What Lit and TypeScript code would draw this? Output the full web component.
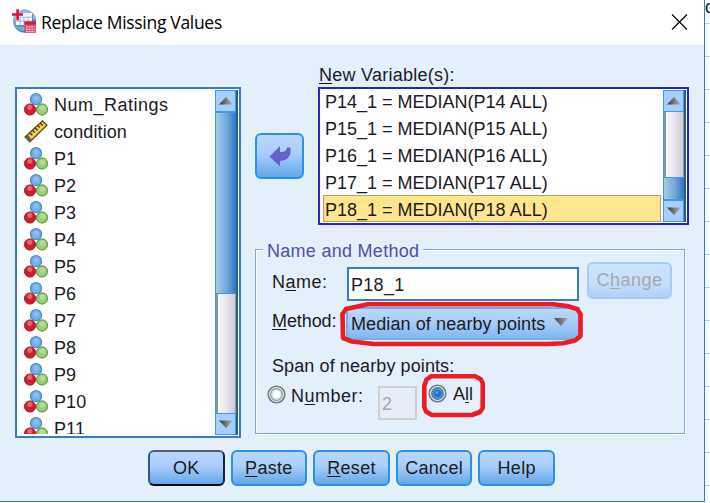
import { LitElement, html, css, svg } from "lit";
import { customElement, property } from "lit/decorators.js";
import { classMap } from "lit/directives/class-map.js";
import { styleMap } from "lit/directives/style-map.js";

const nominalIcon = html`<svg width="24" height="23" viewBox="0 0 24 23">
  <circle cx="12" cy="6.2" r="5.5" fill="#75adea" stroke="#4b8bd2" stroke-width="1.3" />
  <circle cx="12.3" cy="5" r="2.6" fill="#93c1f3" opacity=".8" />
  <circle cx="18" cy="16.5" r="5.5" fill="#9ccb7c" stroke="#6aa545" stroke-width="1.3" />
  <circle cx="18.5" cy="15" r="2.8" fill="#b9dda0" opacity=".8" />
  <circle cx="6" cy="16.5" r="5.6" fill="#c9202a" stroke="#ae1730" stroke-width="1" />
  <circle cx="5.8" cy="14.3" r="2.6" fill="#e57f85" opacity=".75" />
</svg>`;

const scaleIcon = html`<svg width="24" height="23" viewBox="0 0 24 23">
  <path d="M1 17 L18.5 .8 L23 5.2 L5.8 22Z" fill="#efc943" stroke="#514522" stroke-width="1.2" />
  <path d="M1.3 17.3 L5.8 22 L8.2 19.6 L3.9 15Z" fill="#6e6038" />
  <path d="M6 13l2.6 2.6M8.6 10.5l2 2M11.2 8l2.6 2.6M13.8 5.6l2 2M16.4 3.2l2.6 2.6" stroke="#40371a" stroke-width="1.4" />
  <path d="M5.8 18.4 L20.4 4.6" stroke="#fbe887" stroke-width="1" opacity=".8" />
</svg>`;

const appIcon = html`<svg width="24" height="24" viewBox="0 0 24 24">
  <defs>
    <linearGradient id="globe" x1="0" y1="0" x2="1" y2="1">
      <stop offset="0" stop-color="#c5dcee" /><stop offset=".45" stop-color="#5a94c8" /><stop offset="1" stop-color="#2e6ca8" />
    </linearGradient>
  </defs>
  <circle cx="12.5" cy="12" r="11.6" fill="url(#globe)" />
  <path d="M11 .4a11.6 11.6 0 0 1 12.8 10.4h-3V5H11z" fill="#9ab8d4" />
  <rect x="4" y="4" width="16" height="12" fill="#f4f8fc" />
  <path d="M4 8.2h16M4 12h16M8 8v8M12 8v8M16 8v8" stroke="#8fb0d0" stroke-width=".9" />
  <path d="M2.5 17c2 3.5 6 5 10 5v-4z" fill="#75a9d6" />
  <path d="M5.6 .3v11M0 5.5h11" stroke="#d2153c" stroke-width="2.6" />
  <rect x="12.5" y="12.5" width="11.5" height="11.5" fill="#dc4b68" />
  <path d="M12.5 14h11.5" stroke="#c41f45" stroke-width="3" />
  <path d="M14 17.8h9M14 20.3h9M14 22.7h9" stroke="#f9d3da" stroke-width="1.3" stroke-dasharray="1.8 .9" />
</svg>`;

@customElement("scroll-rail")
class ScrollRail extends LitElement {
  @property({ type: Number }) start = 0;
  @property({ type: Number }) size = 0;
  static styles = css`
    :host { display: flex; flex-direction: column; width: 23px; box-sizing: border-box; border-left: 1px solid #3d97ee; border-right: 2px solid #235f9e; }
    .end { height: 22px; box-sizing: border-box; flex: none; background: #a6ceff; border: 1px solid #3d97ee; border-left-width: 0; display: flex; align-items: center; justify-content: center; }
    .track { flex: 1; display: flex; flex-direction: column; box-sizing: border-box; background: linear-gradient(90deg, #f7f7f9, #e9e8ee 45%, #cdccd4); border-left: 2px solid #8395ad; border-right: 1px solid #9696a0; }
    .thumb { flex: none; margin: 0 -1px 0 -2px; box-sizing: border-box; background: linear-gradient(90deg, #a8cbe9, #6fa7d9 55%, #3179bd); border-top: 1px solid #3d97ee; border-bottom: 1px solid #3d97ee; }
    svg { display: block; }
  `;
  render() {
    const arrow = (up: boolean) => html`<svg width="14" height="8" viewBox="0 0 14 8">
      <defs><linearGradient id="g"><stop offset="0" stop-color="#333" /><stop offset=".5" stop-color="#777" /><stop offset="1" stop-color="#b9b4ac" /></linearGradient></defs>
      <path d=${up ? "M0 7.5L7 0L14 7.5Z" : "M0 .5L7 8L14 .5Z"} fill="url(#g)" />
    </svg>`;
    return html`<div class="end">${arrow(true)}</div>
      <div class="track"><div class="thumb" style=${styleMap({ marginTop: `${this.start}px`, height: `${this.size}px` })}></div></div>
      <div class="end">${arrow(false)}</div>`;
  }
}

@customElement("dialog-button")
class DialogButton extends LitElement {
  @property() variant = "";
  static styles = css`
    :host { display: block; flex: none; }
    .btn { height: 100%; box-sizing: border-box; border: 2px solid #2f8fe6; border-radius: 6px; background: linear-gradient(#b9d7fd, #a9cdfa 45%, #83b8ef 75%, #62a6ea); display: flex; align-items: center; justify-content: center; }
    .primary { border-color: #555c68 #10253c #080b10 #31588a; }
    .disabled { border-color: #a3cdf5; background: linear-gradient(#cfe3fc, #c6dffb 55%, #afd2f6); color: #a4a8ad; }
  `;
  render() {
    return html`<div class=${classMap({ btn: true, primary: this.variant === "primary", disabled: this.variant === "disabled" })}><slot></slot></div>`;
  }
}

const sources = ["Num_Ratings", "condition", ...Array.from({ length: 11 }, (_, i) => `P${i + 1}`)];
const created = [14, 15, 16, 17, 18];

@customElement("app-root")
class AppRoot extends LitElement {
  static styles = css`
    :host { display: block; position: relative; width: 710px; height: 503px; overflow: hidden; background: #fff; color: #1c1a24; font: 18px/21px "Liberation Sans", Arial, sans-serif; white-space: nowrap; }
    u { text-decoration: underline; text-decoration-thickness: 1px; text-underline-offset: 2px; text-decoration-skip-ink: none; }
    svg { display: block; }
    .screen { display: flex; height: 503px; }
    .window { width: 704px; height: 501px; flex: none; border-right: 1px solid #1a82d8; border-bottom: 1px solid #1a82d8; background: #e3effb; }
    .sheet { flex: 1; overflow: hidden; background: repeating-linear-gradient(#fff 0 23px, #b4cfea 23px 24px, #fff 24px 33px); line-height: 15px; font-size: 18px; }
    .title { height: 45px; box-sizing: border-box; background: #fff; display: flex; padding: 9px 16px 0 12px; }
    .title h1 { margin: 0 0 0 5px; font: 17.5px/27px "Open Sans", "Noto Sans", sans-serif; color: #000; flex: 1; letter-spacing: -0.31px; }
    .close { margin-top: 5px; }
    .main { display: flex; height: 393px; padding: 0 15px; }
    .list { box-sizing: border-box; display: flex; background: #fff; overflow: hidden; }
    .sources { width: 226px; height: 351px; margin-top: 42px; border: 2px solid #3a7cc0; padding-right: 1px; flex: none; }
    .items { flex: 1; overflow: hidden; }
    .sources .items { padding: 2px 0 0 7px; height: 345px; box-sizing: border-box; }
    .sources scroll-rail { margin: 1px 0; }
    .item { display: flex; height: 27px; line-height: 29px; letter-spacing: .1px; }
    .item svg { margin: 2px 6px 0 0; flex: none; }
    .item.wide { letter-spacing: .5px; }
    .move { width: 49px; height: 46px; margin: 88px 14px 0; }
    .right { width: 371px; flex: none; margin-top: 20px; }
    .caption { height: 22px; padding-left: 1px; letter-spacing: .25px; }
    .targets { height: 138px; border: 2px solid #2626c0; padding: 0 1px 0 3px; }
    .targets .items { margin-top: -2px; }
    .targets scroll-rail { margin: 1px 0 1px 2px; }
    .targets .item { line-height: 31px; padding-left: 2px; box-sizing: border-box; letter-spacing: 0; }
    .targets .item.selected { background: #ffe68c; border: 1px solid #b5a36a; line-height: 29px; padding-left: 1px; }
    .group { position: relative; margin: 24px 0 0 -63px; width: 430px; height: 185px; box-sizing: border-box; border: 1px solid #7ba8d8; box-shadow: 1px 1px 0 #fff, inset 1px 1px 0 #fff; padding: 0 0 0 16px; }
    .legend { position: absolute; left: 7px; top: -9px; padding: 0 4px; background: #e3effb; color: #5250a8; letter-spacing: .28px; }
    .line { display: flex; }
    .name-line { padding-top: 12px; }
    .name-line label { width: 75px; margin-top: 10px; letter-spacing: .5px; }
    .input { box-sizing: border-box; background: #fff; border: 2px solid #3c7fc1; width: 232px; height: 34px; line-height: 33px; padding-left: 2px; margin-top: 5px; letter-spacing: .3px; }
    .change { width: 85px; height: 37px; margin-left: 8px; letter-spacing: .5px; }
    .method-line { margin-top: 6px; height: 33px; }
    .method-line label { width: 74px; margin-top: 4px; letter-spacing: -.1px; }
    .combo { box-sizing: border-box; width: 234px; height: 33px; border: 2px solid #70b0ef; background: linear-gradient(#bad8fb, #a3caf7 55%, #80b8ef); padding: 0 10px 0 3px; display: flex; justify-content: space-between; line-height: 31px; letter-spacing: .1px; }
    .combo svg { margin-top: 9px; }
    .span-line { margin-top: 16px; letter-spacing: .1px; }
    .radio-line { margin: 8px 0 0 -5px; }
    .radio-line span { margin: 1px 0 0 5px; }
    .number { width: 87px; letter-spacing: .5px; }
    .input.off { width: 39px; height: 34px; background: #e6edf6; border-color: #cdcfd2; color: #a7a7a7; margin-top: 1px; line-height: 33px; }
    .radio-all { margin: -1px 0 0 11px; }
    .radio-line .all-text { margin: -1px 0 0 6px; }
    .footer { display: flex; gap: 6px; padding: 12px 0 0 148px; }
    .footer dialog-button { width: 76.6px; height: 36px; letter-spacing: .3px; }
    .marks { position: absolute; left: 0; top: 0; pointer-events: none; }
  `;

  radio(on: boolean) {
    return html`<svg width="19" height="19" viewBox="0 0 19 19">
      <circle cx="9.5" cy="9.5" r="8.3" fill="#e8eef3" stroke="#6c7a85" stroke-width="1.5" />
      <circle cx="9.5" cy="9.5" r="5.8" fill=${on ? "#4b93e2" : "#fff"} stroke=${on ? "#5a7390" : "#8396a5"} stroke-width="1.3" />
      ${on ? svg`<circle cx="9.5" cy="9.5" r="3.6" fill="#1c6fd0"/><circle cx="8.8" cy="8.6" r="1.5" fill="#55a2ee"/>` : svg`<circle cx="9.5" cy="9.5" r="4.4" fill="none" stroke="#b9d8f2" stroke-width="1"/>`}
    </svg>`;
  }

  render() {
    return html`
      <div class="screen">
        <div class="window">
          <div class="title">
            ${appIcon}
            <h1>Replace Missing Values</h1>
            <svg class="close" width="17" height="16" viewBox="0 0 17 16"><path d="M1 .5L16 15.5M16 .5L1 15.5" stroke="#000" stroke-width="1.15" /></svg>
          </div>
          <div class="main">
            <div class="list sources">
              <div class="items">
                ${sources.map((s, i) => html`<div class=${classMap({ item: true, wide: i === 0 })}>${i === 1 ? scaleIcon : nominalIcon}<span>${s}</span></div>`)}
              </div>
              <scroll-rail .start=${0} .size=${182}></scroll-rail>
            </div>
            <dialog-button class="move">
              <svg width="22" height="21" viewBox="0 0 22 21"><path d="M.5 10.5L11 0V6Q17.5 6.5 18 1.5H21.5V7Q20 14.5 11 15V20.5Z" fill="#665fce" /></svg>
            </dialog-button>
            <div class="right">
              <div class="caption"><u>N</u>ew Variable(s):</div>
              <div class="list targets">
                <div class="items">
                  ${created.map((n) => html`<div class=${classMap({ item: true, selected: n === 18 })}>P${n}_1 = MEDIAN(P${n} ALL)</div>`)}
                </div>
                <scroll-rail .start=${65} .size=${23}></scroll-rail>
              </div>
              <div class="group">
                <div class="legend">Name and Method</div>
                <div class="line name-line">
                  <label>N<u>a</u>me:</label>
                  <div class="input">P18_1</div>
                  <dialog-button class="change" variant="disabled"><span>C<u>h</u>ange</span></dialog-button>
                </div>
                <div class="line method-line">
                  <label><u>M</u>ethod:</label>
                  <div class="combo">Median of nearby points
                    <svg width="14" height="8" viewBox="0 0 14 8"><defs><linearGradient id="d"><stop offset="0" stop-color="#444" /><stop offset="1" stop-color="#aaa" /></linearGradient></defs><path d="M0 0H14L7 8Z" fill="url(#d)" /></svg>
                  </div>
                </div>
                <div class="span-line">Span of nearby points:</div>
                <div class="line radio-line">
                  ${this.radio(false)}
                  <span class="number">N<u>u</u>mber:</span>
                  <div class="input off">2</div>
                  <div class="radio-all">${this.radio(true)}</div>
                  <span class="all-text">A<u>l</u>l</span>
                </div>
              </div>
            </div>
          </div>
          <div class="footer">
            <dialog-button variant="primary">OK</dialog-button>
            <dialog-button><span><u>P</u>aste</span></dialog-button>
            <dialog-button><span><u>R</u>eset</span></dialog-button>
            <dialog-button>Cancel</dialog-button>
            <dialog-button>Help</dialog-button>
          </div>
        </div>
        <div class="sheet">d</div>
      </div>
      <svg class="marks" width="710" height="503" viewBox="0 0 710 503" fill="none" stroke="#ed1c24" stroke-width="4.6" stroke-linejoin="round">
        <path d="M368 304.3H553L567 306L577 309L580.5 314V336L575 340.5L563 343.2L548 344H374L352 341.5L343 338L342.5 314L346 309Z" />
        <path d="M431 376.3H475L480.5 379L482.7 383V408L480 412L472 415H432L426 411.5L424.3 407V386L426.5 379.5Z" />
      </svg>
    `;
  }
}
